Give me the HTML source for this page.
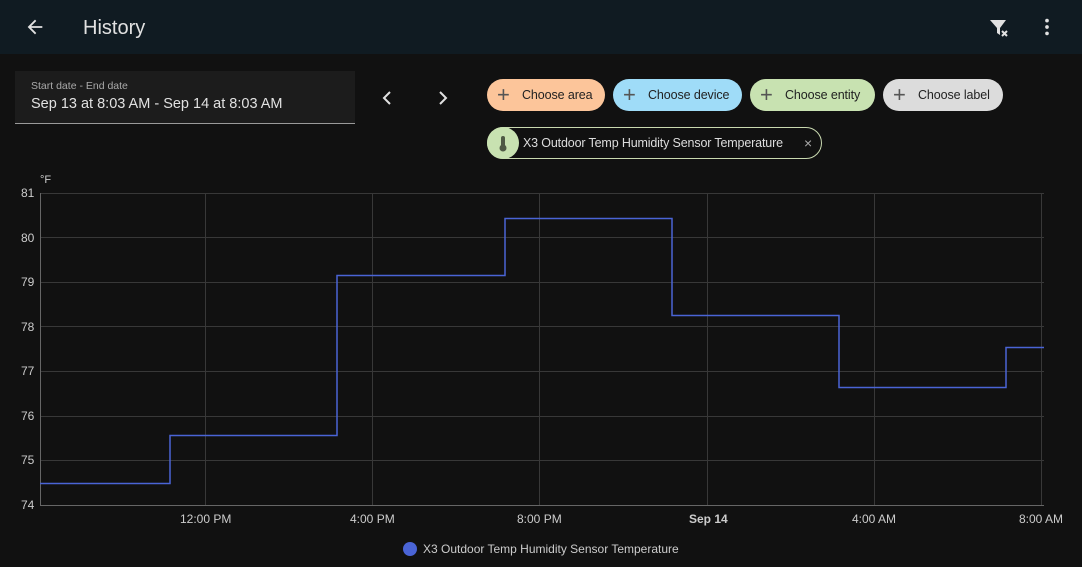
<!DOCTYPE html><html><head><style>
body{margin:0;width:1082px;height:567px;background:#111;font-family:"Liberation Sans",sans-serif;color:#e1e1e1;overflow:hidden;position:relative}
.hdr{position:absolute;left:0;top:0;width:1082px;height:54px;background:#101b22}
.t{position:absolute;left:83px;top:17px;font-size:20px;color:#e1e1e1}
.date{position:absolute;left:15px;top:71px;width:340px;height:52px;background:#1c1c1c;border-bottom:1px solid #9a9a9a}
.chip{position:absolute;top:79px;height:32px;border-radius:16px;font-size:12.5px;color:#222;line-height:32px;box-sizing:border-box;padding-left:35px;letter-spacing:-0.1px}
.chip b{position:absolute;left:10px;top:0;font-weight:normal;font-size:22px;color:#555}
.ent{position:absolute;left:487px;top:127px;width:335px;height:32px;border:1px solid #c9d9b0;border-radius:16px;box-sizing:border-box;font-size:12.5px;line-height:30px;color:#ddd}
.ax{position:absolute;font-size:12px;color:#ccc}
</style></head><body>
<div class="hdr"></div>
<svg style="position:absolute;left:24px;top:16px" width="22" height="22" viewBox="0 0 24 24"><path d="M20 11H7.8l5.6-5.6L12 4l-8 8 8 8 1.4-1.4L7.8 13H20z" fill="#e1e1e1"/></svg>
<div class="t">History</div>
<svg style="position:absolute;left:987px;top:16px" width="24" height="24" viewBox="0 0 24 24"><path d="M3 4h16l-6 8v7l-3-2v-5z" fill="#e1e1e1"/><path d="M15 15l5 5M20 15l-5 5" stroke="#e1e1e1" stroke-width="2"/></svg>
<svg style="position:absolute;left:1036px;top:16px" width="22" height="22" viewBox="0 0 24 24"><circle cx="12" cy="5" r="2" fill="#e1e1e1"/><circle cx="12" cy="12" r="2" fill="#e1e1e1"/><circle cx="12" cy="19" r="2" fill="#e1e1e1"/></svg>
<div class="date"><div style="position:absolute;left:16px;top:9px;font-size:10.5px;color:#aaa">Start date - End date</div><div style="position:absolute;left:16px;top:25px;font-size:14.5px;color:#e1e1e1">Sep 13 at 8:03 AM - Sep 14 at 8:03 AM</div></div>
<svg style="position:absolute;left:380px;top:90px" width="14" height="16" viewBox="0 0 14 16"><path d="M10 2L4 8l6 6" stroke="#e1e1e1" stroke-width="2" fill="none"/></svg>
<svg style="position:absolute;left:436px;top:90px" width="14" height="16" viewBox="0 0 14 16"><path d="M4 2l6 6-6 6" stroke="#e1e1e1" stroke-width="2" fill="none"/></svg>
<div class="chip" style="left:487px;width:118px;background:#fcc59a"><b>+</b>Choose area</div>
<div class="chip" style="left:613px;width:129px;background:#9fdcf8"><b>+</b>Choose device</div>
<div class="chip" style="left:750px;width:125px;background:#c8e2b1"><b>+</b>Choose entity</div>
<div class="chip" style="left:883px;width:120px;background:#dcdcdc"><b>+</b>Choose label</div>
<div class="ent"><div style="position:absolute;left:-1px;top:-1px;width:32px;height:32px;border-radius:16px;background:#c8e2b1"></div>
<svg style="position:absolute;left:9px;top:6px" width="12" height="20" viewBox="0 0 12 20"><rect x="4" y="2" width="4" height="11" rx="2" fill="#4f5a45"/><circle cx="6" cy="14" r="3.5" fill="#4f5a45"/></svg>
<span style="position:absolute;left:35px;letter-spacing:-0.15px">X3 Outdoor Temp Humidity Sensor Temperature</span><span style="position:absolute;left:316px;color:#aaa;font-size:14px">×</span></div>
<svg style="position:absolute;left:0;top:0" width="1082" height="567">
<g stroke="#383838" stroke-width="1">
<line x1="40" y1="193.5" x2="1044" y2="193.5"/><line x1="40" y1="237.5" x2="1044" y2="237.5"/><line x1="40" y1="282.5" x2="1044" y2="282.5"/><line x1="40" y1="326.5" x2="1044" y2="326.5"/><line x1="40" y1="371.5" x2="1044" y2="371.5"/><line x1="40" y1="416.5" x2="1044" y2="416.5"/><line x1="40" y1="460.5" x2="1044" y2="460.5"/>
<line x1="205.5" y1="193" x2="205.5" y2="505"/><line x1="372.5" y1="193" x2="372.5" y2="505"/><line x1="539.5" y1="193" x2="539.5" y2="505"/><line x1="707.5" y1="193" x2="707.5" y2="505"/><line x1="874.5" y1="193" x2="874.5" y2="505"/><line x1="1041.5" y1="193" x2="1041.5" y2="505"/>
</g>
<line x1="40.5" y1="193" x2="40.5" y2="505" stroke="#666"/><line x1="40" y1="505.5" x2="1044" y2="505.5" stroke="#666"/>
<path d="M40 483.5H170V435.5H337V275.5H505V218.5H672V315.5H839V387.5H1006V347.5H1044" stroke="#4a64d6" stroke-width="1.5" fill="none"/>
<circle cx="410" cy="549" r="7" fill="#4a64d6"/>
</svg>
<div class="ax" style="left:40px;top:174px;font-size:11px">°F</div>
<div class="ax" style="left:21px;top:186px">81</div><div class="ax" style="left:21px;top:231px">80</div><div class="ax" style="left:21px;top:275px">79</div><div class="ax" style="left:21px;top:320px">78</div><div class="ax" style="left:21px;top:364px">77</div><div class="ax" style="left:21px;top:409px">76</div><div class="ax" style="left:21px;top:453px">75</div><div class="ax" style="left:21px;top:498px">74</div>
<div class="ax" style="left:180px;top:512px">12:00 PM</div><div class="ax" style="left:350px;top:512px">4:00 PM</div><div class="ax" style="left:517px;top:512px">8:00 PM</div><div class="ax" style="left:689px;top:512px;font-weight:bold">Sep 14</div><div class="ax" style="left:852px;top:512px">4:00 AM</div><div class="ax" style="left:1019px;top:512px">8:00 AM</div>
<div class="ax" style="left:423px;top:542px">X3 Outdoor Temp Humidity Sensor Temperature</div>
</body></html>
